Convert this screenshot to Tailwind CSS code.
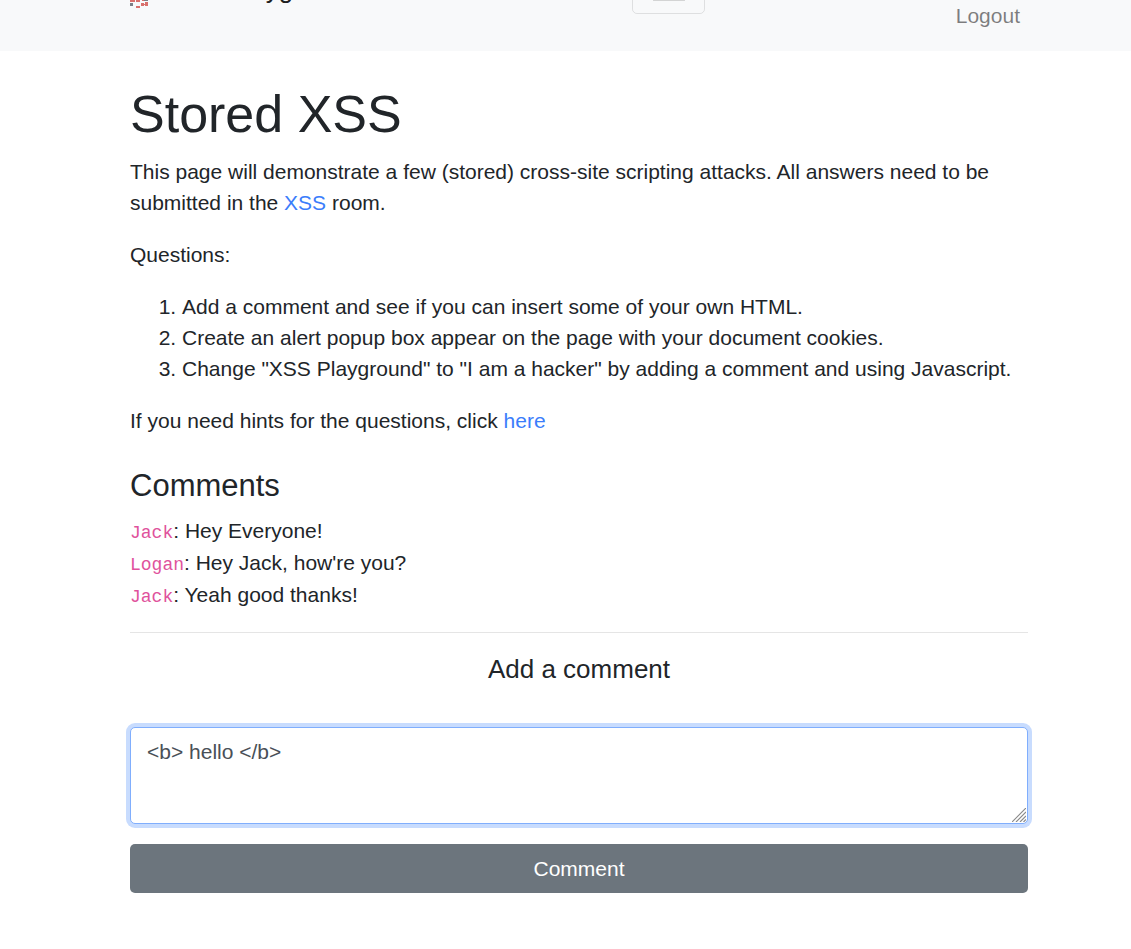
<!DOCTYPE html>
<html lang="en">
<head>
<meta charset="utf-8">
<meta name="viewport" content="width=device-width, initial-scale=1">
<title>Stored XSS</title>
<script src="https://cdn.jsdelivr.net/npm/@tailwindcss/browser@4"></script>
</head>
<body class="bg-white font-['Liberation_Sans',Arial,sans-serif] text-[21px] leading-[31px] text-[#212529]">
<header class="overflow-hidden bg-[#f8f9fa]">
  <nav class="ml-[130px] mr-[103px] -mt-9 flex items-start justify-between pb-5">
    <a href="#" class="flex items-start text-[26px] leading-[39px] text-black/90">
      <svg class="mt-1 h-10 w-[39px]" viewBox="0 0 39 40" aria-hidden="true">
        <g fill="#d9706c"><path d="M0 32h5v2H0zM6 32h4v2H6zM11 35h3v3h-3zM15 34h3v4h-3zM13 36h3v1h-3zM6 38h4v2H6zM12 32h2v1h-2z"/></g>
        <g fill="#7b7f86"><path d="M0 35h3v3H0zM14 31h4v2h-4z"/></g>
      </svg>
      <span class="mt-1.5">XSS Playground</span>
    </a>
    <button type="button" aria-label="Toggle navigation" class="ml-[22px] flex h-[50px] w-[73px] items-start justify-center rounded-[5px] border border-black/10">
      <svg class="h-9 w-10" viewBox="0 0 40 36" fill="none" stroke="#000" stroke-opacity=".3" stroke-width="3" stroke-linecap="round" aria-hidden="true"><path d="M5 10h30M5 22h30M5 34h30"/></svg>
    </button>
    <a href="#" class="mr-2 mt-9 text-black/50">Logout</a>
  </nav>
</header>
<main class="ml-[130px] mr-[103px] pt-8">
  <h1 class="mb-[11px] text-[52px] leading-[62px]">Stored XSS</h1>
  <p class="mb-[21px]">This page will demonstrate a few (stored) cross-site scripting attacks. All answers need to be submitted in the <a href="#" class="text-[#3b7dfb]">XSS</a> room.</p>
  <p class="mb-[21px]">Questions:</p>
  <ol class="mb-[21px] list-decimal pl-[52px]">
    <li>Add a comment and see if you can insert some of your own HTML.</li>
    <li>Create an alert popup box appear on the page with your document cookies.</li>
    <li>Change "XSS Playground" to "I am a hacker" by adding a comment and using Javascript.</li>
  </ol>
  <p class="mb-[31px]">If you need hints for the questions, click <a href="#" class="text-[#3b7dfb]">here</a></p>
  <h2 class="mb-[11px] text-[31px] leading-[37px]">Comments</h2>
  <div class="leading-8">
    <p><code class="font-['Liberation_Mono',monospace] text-[18px] leading-none text-[#e0529c]">Jack</code>: Hey Everyone!</p>
    <p><code class="font-['Liberation_Mono',monospace] text-[18px] leading-none text-[#e0529c]">Logan</code>: Hey Jack, how're you?</p>
    <p><code class="font-['Liberation_Mono',monospace] text-[18px] leading-none text-[#e0529c]">Jack</code>: Yeah good thanks!</p>
  </div>
  <hr class="my-[21px] border-black/10">
  <form>
    <label for="comment" class="mb-[42px] block text-center text-[26px] leading-[31px]">Add a comment</label>
    <div class="relative mb-5">
      <textarea id="comment" class="block h-[97px] w-full resize-y rounded-[5px] border border-[#80aefd] bg-white px-4 py-2 text-[#495057] shadow-[0_0_0_4px_#c8dcfe] outline-none [&::-webkit-resizer]:hidden">&lt;b&gt; hello &lt;/b&gt;</textarea>
      <svg class="pointer-events-none absolute bottom-0.5 right-0.5 size-3.5" viewBox="0 0 14 14" fill="none" stroke="#8a8a8a" stroke-width="1.2" aria-hidden="true"><path d="M0 14L14 0M4 14L14 4M8 14l6-6M11.500 14l2.500-2.500"/></svg>
    </div>
    <button type="button" class="block h-[49px] w-full rounded-[5px] bg-[#6c757d] text-center text-white">Comment</button>
  </form>
</main>
</body>
</html>
